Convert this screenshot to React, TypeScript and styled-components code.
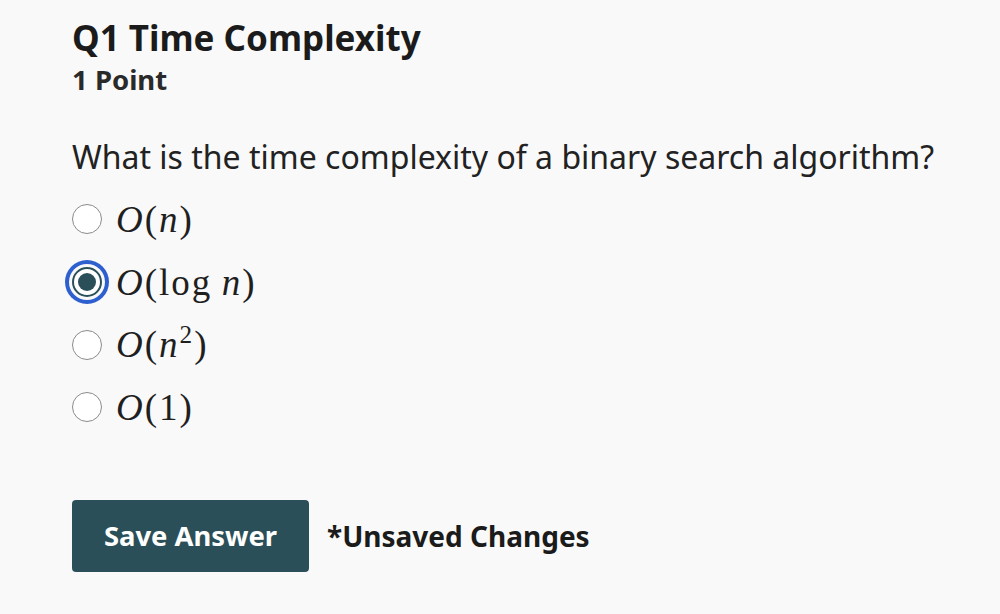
import React, { useState } from "react";
import styled, { createGlobalStyle } from "styled-components";

const Global = createGlobalStyle`
  html, body { margin: 0; padding: 0; background: #f9f9f9; }
  body { font-family: "Noto Sans", "Open Sans", sans-serif; color: #1f1f1f; }
`;

const Page = styled.div`
  padding: 14px 24px 0 72px;
  display: flex;
  flex-direction: column;
`;

const Title = styled.h1`
  margin: 0;
  font-size: 35px;
  font-weight: 700;
  line-height: 48px;
  color: #1b1b1b;
`;

const Points = styled.div`
  font-size: 27.5px;
  font-weight: 700;
  line-height: 36px;
  color: #2a2a2a;
`;

const Question = styled.p`
  margin: 38px 0 0 0;
  font-size: 32px;
  line-height: 42px;
  color: #222;
`;

const Options = styled.div`
  margin-top: 10px;
  display: flex;
  flex-direction: column;
`;

const OptionRow = styled.label`
  display: flex;
  align-items: center;
  gap: 14px;
  height: 62.7px;
  cursor: pointer;
`;

const Radio = styled.span<{ $checked: boolean }>`
  position: relative;
  box-sizing: border-box;
  width: 30px;
  height: 30px;
  border-radius: 50%;
  background: #fff;
  border: ${(p) => (p.$checked ? "2px solid #2b4f59" : "1.5px solid #8b8b8b")};
  flex: none;
  ${(p) =>
    p.$checked &&
    `
    box-shadow: 0 0 0 3px #f9f9f9, 0 0 0 7px #2d5fcf;
    &::after {
      content: "";
      position: absolute;
      left: 50%;
      top: 50%;
      width: 18px;
      height: 18px;
      margin: -9px 0 0 -9px;
      border-radius: 50%;
      background: #2b4f59;
    }
  `}
`;

const Math = styled.span`
  font-family: "Liberation Serif", "DejaVu Serif", serif;
  font-size: 37px;
  letter-spacing: 2px;
  color: #1f1f1f;
  line-height: 1;
  white-space: nowrap;
`;

const MI = styled.i`
  font-style: italic;
`;

const Sup = styled.sup`
  font-size: 0.68em;
  vertical-align: 0.55em;
  line-height: 0;
`;

const Footer = styled.div`
  margin-top: 61px;
  display: flex;
  align-items: center;
  gap: 18px;
`;

const SaveButton = styled.button`
  width: 237px;
  height: 72px;
  border: none;
  border-radius: 4px;
  background: #2b4f59;
  color: #fff;
  font-family: "Noto Sans", "Open Sans", sans-serif;
  font-size: 27.4px;
  font-weight: 700;
  cursor: pointer;
`;

const Unsaved = styled.span`
  font-size: 28px;
  font-weight: 700;
  color: #1b1b1b;
`;

const options: { key: string; render: React.ReactNode }[] = [
  { key: "n", render: <><MI>O</MI>(<MI>n</MI>)</> },
  { key: "logn", render: <><MI>O</MI>(log{"\u2009"}<MI>n</MI>)</> },
  { key: "n2", render: <><MI>O</MI>(<MI>n</MI><Sup>2</Sup>)</> },
  { key: "1", render: <><MI>O</MI>(1)</> },
];

export default function App() {
  const [selected, setSelected] = useState("logn");
  return (
    <>
      <Global />
      <Page>
        <Title>Q1 Time Complexity</Title>
        <Points>1 Point</Points>
        <Question>What is the time complexity of a binary search algorithm?</Question>
        <Options>
          {options.map((o) => (
            <OptionRow key={o.key} onClick={() => setSelected(o.key)}>
              <Radio $checked={selected === o.key} />
              <Math>{o.render}</Math>
            </OptionRow>
          ))}
        </Options>
        <Footer>
          <SaveButton>Save Answer</SaveButton>
          <Unsaved>*Unsaved Changes</Unsaved>
        </Footer>
      </Page>
    </>
  );
}
